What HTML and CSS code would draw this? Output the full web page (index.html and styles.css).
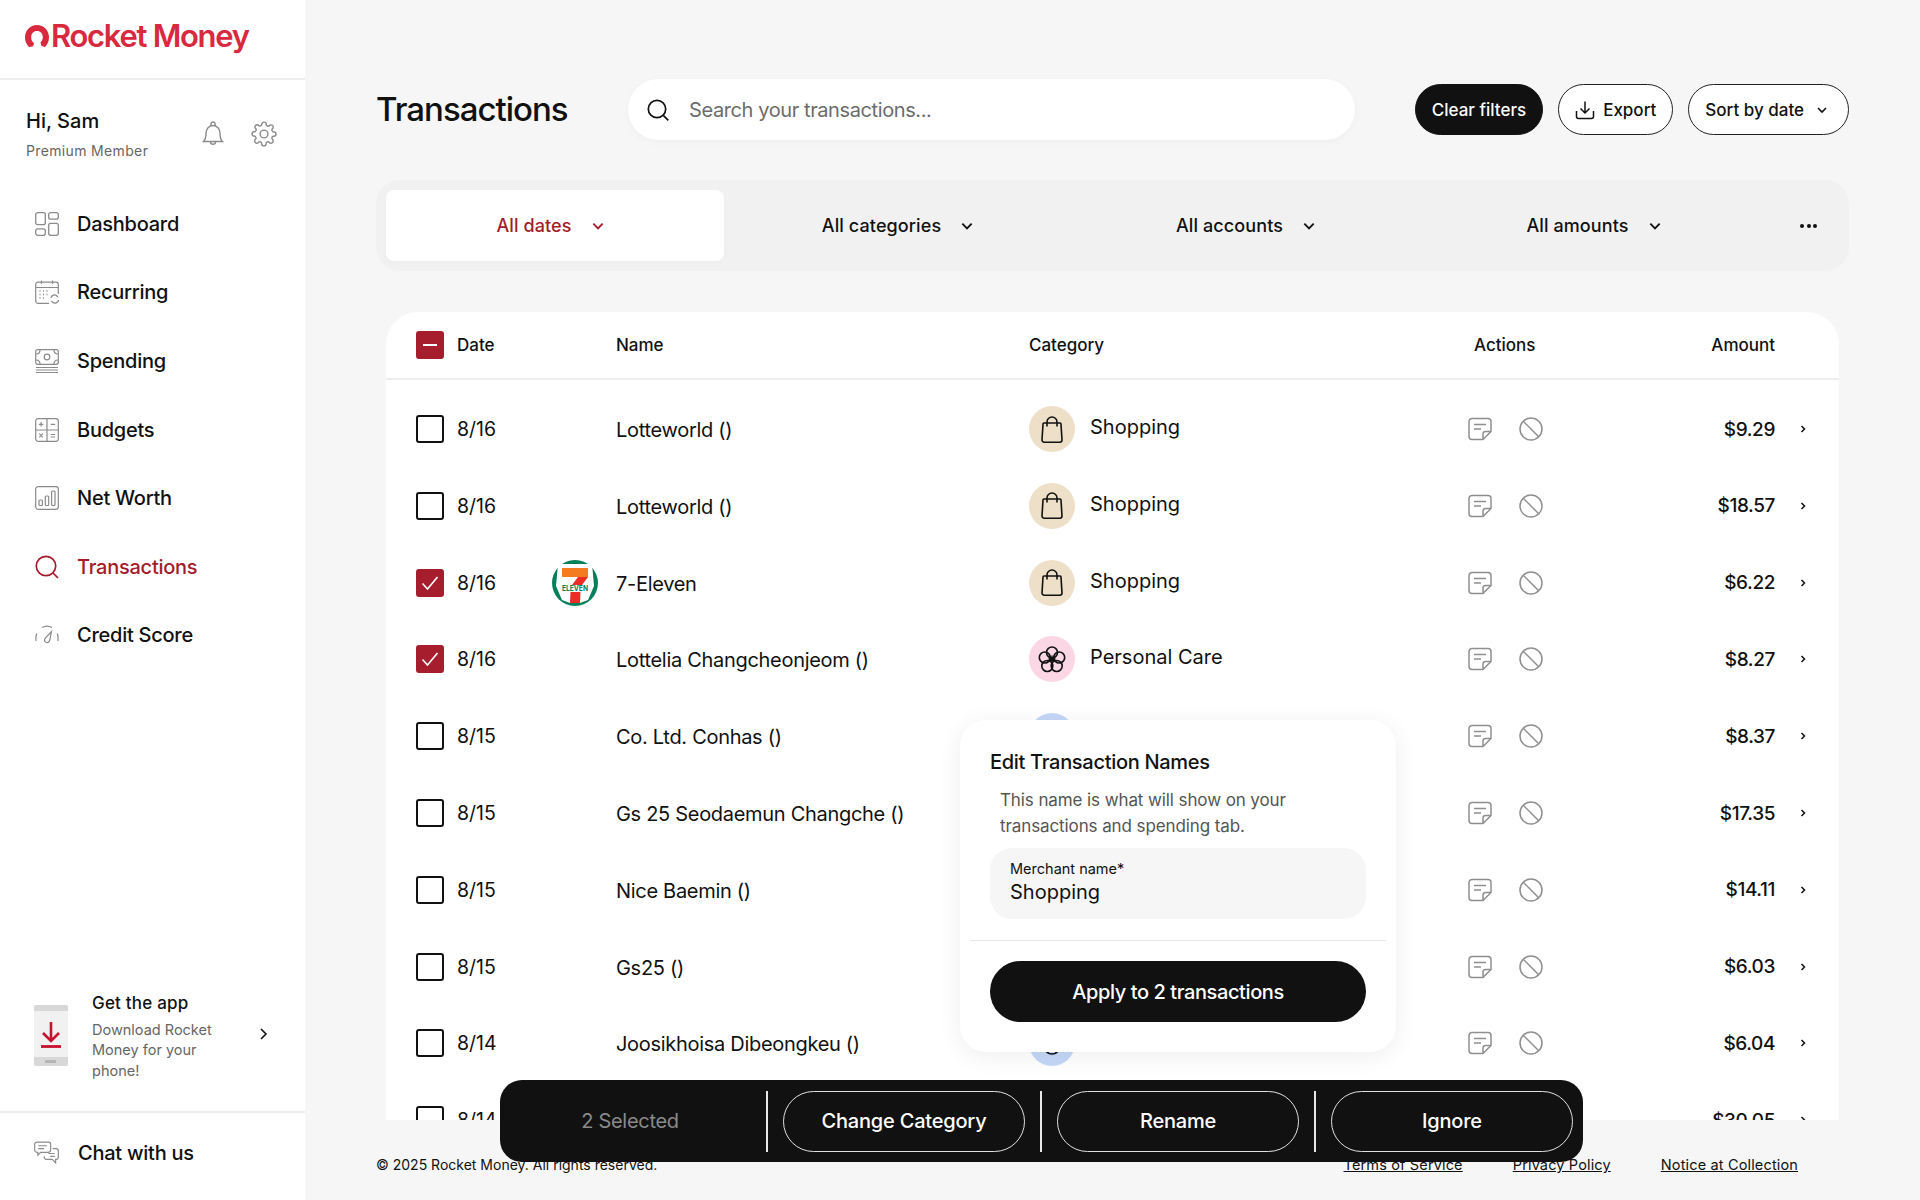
FILE: index.html
```html
<!DOCTYPE html>
<html lang="en">
<head>
  <meta charset="UTF-8" />
  <title>Transactions - Rocket Money</title>
  <link rel="stylesheet" href="styles.css">
  <meta name="viewport" content="width=device-width, initial-scale=1.0" />
</head>
<body>

  <!-- shared icons -->
  <svg class="defs" width="0" height="0">
    <symbol id="i-down" viewBox="0 0 12 12"><path d="M2 4l4 4 4-4" fill="none" stroke="currentColor" stroke-width="1.6"/></symbol>
    <symbol id="i-bag" viewBox="0 0 22 27"><path d="M3 7h16a1 1 0 0 1 1 1l1 16a2.200 2.200 0 0 1-2.200 2.200H3.200A2.200 2.200 0 0 1 1 24L2 8a1 1 0 0 1 1-1zM6 10.500V6a5 5 0 0 1 10 0v4.500" fill="none" stroke="currentColor" stroke-width="1.600"/></symbol>
    <symbol id="i-flower" viewBox="0 0 28 28" fill="none" stroke="currentColor" stroke-width="1.600"><circle cx="14" cy="7.500" r="5.500"/><circle cx="6.800" cy="12.500" r="5.500"/><circle cx="21.200" cy="12.500" r="5.500"/><circle cx="9.300" cy="21" r="5.500"/><circle cx="18.700" cy="21" r="5.500"/><path d="M14 10.500v7M10.500 14h7M11.500 11.500l5 5M16.500 11.500l-5 5" stroke-width="1.400"/></symbol>
    <symbol id="i-note" viewBox="0 0 24 24" fill="none" stroke="currentColor" stroke-width="1.500"><path d="M15 22.500H4a3 3 0 0 1-3-3v-15a3 3 0 0 1 3-3h16a3 3 0 0 1 3 3V14.500zM15 22.500V17a2.500 2.500 0 0 1 2.500-2.500H23M6 7.500h12M6 12h7"/></symbol>
    <symbol id="i-ban" viewBox="0 0 24 24" fill="none" stroke="currentColor" stroke-width="1.500"><circle cx="12" cy="12" r="11"/><path d="M4.300 4.300l15.400 15.400"/></symbol>
    <symbol id="i-next" viewBox="0 0 8 10"><path d="M2.500 2l3 3-3 3" fill="none" stroke="currentColor" stroke-width="1.500"/></symbol>
    <symbol id="i-tick" viewBox="0 0 28 28"><path d="M6.500 14.500l5 5.500 10-12" fill="none" stroke="#fff" stroke-width="1.600"/></symbol>
  </svg>

  <div class="page">
    <aside class="sidebar">
      <div class="brand">
        <svg class="brand-mark" viewBox="0 0 24 24"><path d="M4 23C1.500 20.500 0 17.500 0 13.500 0 6 5.500 1 12 1s12 5 12 12.500c0 4-1.500 7-4 9.500l-3.500-1-1-3.500c1.500-1.500 2.300-3 2.300-5.200 0-3.500-2.300-6.200-5.800-6.200s-5.800 2.700-5.800 6.200c0 3 1.200 4.600 3 6.200l-1.500 3z" fill="#d8293f"/></svg>
        <span class="brand-name">Rocket Money</span>
      </div>

      <div class="user">
        <div>
          <div class="user-name">Hi, Sam</div>
          <div class="user-plan">Premium Member</div>
        </div>
        <div class="user-icons">
          <svg width="22" height="26" viewBox="0 0 22 26" fill="none" stroke="#8a8a8a" stroke-width="1.400"><path d="M1.500 20.500c2-2 2.500-4 2.500-8C4 8 7 4.500 11 4.500s7 3.500 7 8c0 4 .5 6 2.500 8zM9 4.500V3a2 2 0 0 1 4 0v1.500M8.500 21c0 3 5 3 5 0"/></svg>
          <svg width="26" height="26" viewBox="0 0 24 24" fill="none" stroke="#8a8a8a" stroke-width="1.300"><circle cx="12" cy="12" r="3.600"/><path d="M19.400 15a1.700 1.700 0 0 0 .3 1.800l.1.100a2 2 0 1 1-2.900 2.900l-.1-.1a1.700 1.700 0 0 0-2.900 1.200V21a2 2 0 1 1-4 0v-.1A1.700 1.700 0 0 0 7 19.700l-.1.100a2 2 0 1 1-2.900-2.900l.1-.1a1.700 1.700 0 0 0-1.200-2.900H3a2 2 0 1 1 0-4h.1A1.700 1.700 0 0 0 4.300 7l-.1-.1A2 2 0 1 1 7 4l.1.1a1.700 1.700 0 0 0 1.900.3 1.700 1.700 0 0 0 1-1.500V3a2 2 0 1 1 4 0v.1a1.700 1.700 0 0 0 2.900 1.200l.1-.1a2 2 0 1 1 2.900 2.900l-.1.1a1.700 1.700 0 0 0 1.200 2.900h.1a2 2 0 1 1 0 4h-.1a1.700 1.700 0 0 0-1.500.9z"/></svg>
        </div>
      </div>

      <nav class="nav">
        <a class="nav-item">
          <svg viewBox="0 0 24 24" fill="none" stroke="#8a8a8a" stroke-width="1.300"><rect x=".7" y=".7" width="9.600" height="12" rx="2"/><rect x="13.700" y=".7" width="9.600" height="6.500" rx="2"/><rect x=".7" y="16.800" width="9.600" height="6.500" rx="2"/><rect x="13.700" y="11.300" width="9.600" height="12" rx="2"/></svg>
          Dashboard
        </a>
        <a class="nav-item">
          <svg viewBox="0 0 24 24" fill="none" stroke="#8a8a8a" stroke-width="1.200"><path d="M14 23.300H3a2.300 2.300 0 0 1-2.300-2.300V4.500A2.300 2.300 0 0 1 3 2.200h18a2.300 2.300 0 0 1 2.300 2.300V14M.7 7.500h22.600M6.500 .5v3.500M17.500 .5v3.500"/><path d="M4.500 11h1M8 11h1M11.500 11h1M4.500 14.500h1M8 14.500h1M11.500 14.500h1M4.500 18h1M8 18h1" stroke-width="1.500"/><path d="M16 18a3.500 3.500 0 0 1 6-2l1 1M23.500 20a3.500 3.500 0 0 1-6 2l-1-1" stroke-width="1.300"/></svg>
          Recurring
        </a>
        <a class="nav-item">
          <svg viewBox="0 0 24 24" fill="none" stroke="#8a8a8a" stroke-width="1.200"><rect x=".7" y=".7" width="22.600" height="14.600" rx="2"/><circle cx="12" cy="8" r="2.800"/><path d="M1 5c2.500 0 4-1.500 4-4M23 5c-2.500 0-4-1.500-4-4M1 11c2.500 0 4 1.500 4 4M23 11c-2.500 0-4 1.500-4 4M1 18.500h22M1 21h22M1 23.500h22"/></svg>
          Spending
        </a>
        <a class="nav-item">
          <svg viewBox="0 0 24 24" fill="none" stroke="#8a8a8a" stroke-width="1.200"><rect x=".7" y=".7" width="22.600" height="22.600" rx="2.500"/><path d="M12 1v22M1 12h22M3.900 6.300h4.400M6.100 4.100v4.400M15.700 6.300h4.400M4.300 15.700l3.600 3.600M7.900 15.700l-3.600 3.600M15.700 16.500h4.400M15.700 19h4.400"/></svg>
          Budgets
        </a>
        <a class="nav-item">
          <svg viewBox="0 0 24 24" fill="none" stroke="#8a8a8a" stroke-width="1.200"><rect x=".7" y=".7" width="22.600" height="22.600" rx="2.500"/><rect x="4" y="14" width="3.400" height="5.500" rx="1"/><rect x="10.300" y="10" width="3.400" height="9.500" rx="1"/><rect x="16.600" y="5" width="3.400" height="14.500" rx="1"/></svg>
          Net Worth
        </a>
        <a class="nav-item nav-item-on">
          <svg viewBox="0 0 24 24" fill="none" stroke="#a41c2c" stroke-width="1.700"><circle cx="11" cy="11" r="9.700"/><path d="M18 18l5 5"/></svg>
          Transactions
        </a>
        <a class="nav-item">
          <svg viewBox="0 0 24 24" fill="none" stroke="#8a8a8a" stroke-width="1.200"><path d="M7 4.500c3-1.700 7-1.700 10 0M1.700 10.500C1 12.500.7 15 1 18M22.300 10.500c.7 2 1 4.500.7 7.500M16.500 8.500L14.800 17c-.5 2-2.200 3-3.800 2.300-1.600-.8-1.900-2.500-.8-4z"/></svg>
          Credit Score
        </a>
      </nav>

      <div class="get-app">
        <svg class="phone" width="34" height="61" viewBox="0 0 34 61"><rect width="34" height="61" rx="2" fill="#f1f1f1"/><path d="M0 6V2a2 2 0 0 1 2-2h30a2 2 0 0 1 2 2v4zM0 52h34v7a2 2 0 0 1-2 2H2a2 2 0 0 1-2-2z" fill="#d8d8d8"/><rect x="11" y="55" width="11" height="3" fill="#b5b5b5"/><path d="M17 17v19M9 28l8 8 8-8" fill="none" stroke="#c4122f" stroke-width="2.600"/><path d="M7 41.500h20" stroke="#c4122f" stroke-width="2.800"/></svg>
        <div class="get-app-text">
          <div class="get-app-title">Get the app</div>
          <div class="get-app-desc">Download Rocket Money for your phone!</div>
        </div>
        <svg class="get-app-go" width="10" height="14" viewBox="0 0 10 14"><path d="M2 2l5 5-5 5" fill="none" stroke="#111" stroke-width="1.600"/></svg>
      </div>

      <a class="chat">
        <svg viewBox="0 0 26 24" fill="none" stroke="#8a8a8a" stroke-width="1.200"><path d="M3 .7h12a2.300 2.300 0 0 1 2.300 2.300v6a2.300 2.300 0 0 1-2.300 2.300H7l-3 3v-3H3A2.300 2.300 0 0 1 .7 9V3A2.300 2.300 0 0 1 3 .7zM4.500 4.500h9M4.500 7.500h6"/><path d="M19.500 7.500H23A2.300 2.300 0 0 1 25.300 9.800v6.500A2.300 2.300 0 0 1 23 18.600h-.5v3.600l-3.500-3.600h-6a2.300 2.300 0 0 1-2.300-2.300v-1M15 12.500h6.500M17 15.500h4.500"/></svg>
        Chat with us
      </a>
    </aside>

    <main class="main">
      <header class="top">
        <h1 class="title">Transactions</h1>
        <div class="search">
          <svg width="24" height="24" viewBox="0 0 24 24" fill="none" stroke="#111" stroke-width="1.700"><circle cx="11" cy="11" r="8.700"/><path d="M17.300 17.300l5 5"/></svg>
          <span>Search your transactions...</span>
        </div>
        <div class="top-actions">
          <button class="pill pill-dark">Clear filters</button>
          <button class="pill">
            <svg width="20" height="20" viewBox="0 0 20 20" fill="none" stroke="#111" stroke-width="1.500"><path d="M10 1.500v11M5.500 8.500l4.500 4.500 4.500-4.500M1.500 11v5.500a2 2 0 0 0 2 2h13a2 2 0 0 0 2-2V11"/></svg>
            Export
          </button>
          <button class="pill">Sort by date <svg class="chev-sm"><use href="#i-down"/></svg></button>
        </div>
      </header>

      <div class="filters">
        <div class="filter filter-on">All dates <svg class="chev"><use href="#i-down"/></svg></div>
        <div class="filter">All categories <svg class="chev"><use href="#i-down"/></svg></div>
        <div class="filter">All accounts <svg class="chev"><use href="#i-down"/></svg></div>
        <div class="filter">All amounts <svg class="chev"><use href="#i-down"/></svg></div>
        <div class="filter filter-more"><i></i><i></i><i></i></div>
      </div>

      <section class="card">
        <div class="row row-head">
          <span class="check check-on"><b class="dash"></b></span>
          <span>Date</span>
          <span></span>
          <span>Name</span>
          <span>Category</span>
          <span class="head-actions">Actions</span>
          <span class="amount">Amount</span>
          <span></span>
        </div>

        <div class="rows">
          <div class="row">
            <span class="check"></span>
            <span class="date">8/16</span>
            <span></span>
            <span class="name">Lotteworld ()</span>
            <span class="cat"><span class="cat-icon tan"><svg class="bag"><use href="#i-bag"/></svg></span><span class="cat-name">Shopping</span></span>
            <span class="acts"><svg><use href="#i-note"/></svg><svg><use href="#i-ban"/></svg></span>
            <span class="amount">$9.29</span>
            <svg class="next"><use href="#i-next"/></svg>
          </div>
          <div class="row">
            <span class="check"></span>
            <span class="date">8/16</span>
            <span></span>
            <span class="name">Lotteworld ()</span>
            <span class="cat"><span class="cat-icon tan"><svg class="bag"><use href="#i-bag"/></svg></span><span class="cat-name">Shopping</span></span>
            <span class="acts"><svg><use href="#i-note"/></svg><svg><use href="#i-ban"/></svg></span>
            <span class="amount">$18.57</span>
            <svg class="next"><use href="#i-next"/></svg>
          </div>
          <div class="row">
            <span class="check check-on"><svg><use href="#i-tick"/></svg></span>
            <span class="date">8/16</span>
            <svg class="seven" viewBox="0 0 46 46">
              <circle cx="23" cy="23" r="23" fill="#00805a"/>
              <path d="M6 4h34l2 22-6 14-8 3H18l-8-3-6-14z" fill="#fff"/>
              <path d="M10 8h26v9H10z" fill="#f47b20"/>
              <path d="M26 17h10l-6 8H20z" fill="#ee2b24"/>
              <path d="M18.500 32h10l-.5 11H18z" fill="#ee2b24"/>
              <text x="23" y="30.500" class="seven-text" textLength="26" lengthAdjust="spacingAndGlyphs">ELEVEN</text>
            </svg>
            <span class="name">7-Eleven</span>
            <span class="cat"><span class="cat-icon tan"><svg class="bag"><use href="#i-bag"/></svg></span><span class="cat-name">Shopping</span></span>
            <span class="acts"><svg><use href="#i-note"/></svg><svg><use href="#i-ban"/></svg></span>
            <span class="amount">$6.22</span>
            <svg class="next"><use href="#i-next"/></svg>
          </div>
          <div class="row">
            <span class="check check-on"><svg><use href="#i-tick"/></svg></span>
            <span class="date">8/16</span>
            <span></span>
            <span class="name">Lottelia Changcheonjeom ()</span>
            <span class="cat"><span class="cat-icon pink"><svg class="flower"><use href="#i-flower"/></svg></span><span class="cat-name">Personal Care</span></span>
            <span class="acts"><svg><use href="#i-note"/></svg><svg><use href="#i-ban"/></svg></span>
            <span class="amount">$8.27</span>
            <svg class="next"><use href="#i-next"/></svg>
          </div>
          <div class="row">
            <span class="check"></span>
            <span class="date">8/15</span>
            <span></span>
            <span class="name">Co. Ltd. Conhas ()</span>
            <span class="cat"><span class="cat-icon blue"></span></span>
            <span class="acts"><svg><use href="#i-note"/></svg><svg><use href="#i-ban"/></svg></span>
            <span class="amount">$8.37</span>
            <svg class="next"><use href="#i-next"/></svg>
          </div>
          <div class="row">
            <span class="check"></span>
            <span class="date">8/15</span>
            <span></span>
            <span class="name">Gs 25 Seodaemun Changche ()</span>
            <span class="cat"></span>
            <span class="acts"><svg><use href="#i-note"/></svg><svg><use href="#i-ban"/></svg></span>
            <span class="amount">$17.35</span>
            <svg class="next"><use href="#i-next"/></svg>
          </div>
          <div class="row">
            <span class="check"></span>
            <span class="date">8/15</span>
            <span></span>
            <span class="name">Nice Baemin ()</span>
            <span class="cat"></span>
            <span class="acts"><svg><use href="#i-note"/></svg><svg><use href="#i-ban"/></svg></span>
            <span class="amount">$14.11</span>
            <svg class="next"><use href="#i-next"/></svg>
          </div>
          <div class="row">
            <span class="check"></span>
            <span class="date">8/15</span>
            <span></span>
            <span class="name">Gs25 ()</span>
            <span class="cat"></span>
            <span class="acts"><svg><use href="#i-note"/></svg><svg><use href="#i-ban"/></svg></span>
            <span class="amount">$6.03</span>
            <svg class="next"><use href="#i-next"/></svg>
          </div>
          <div class="row">
            <span class="check"></span>
            <span class="date">8/14</span>
            <span></span>
            <span class="name">Joosikhoisa Dibeongkeu ()</span>
            <span class="cat"><span class="cat-icon blue"><svg class="smile" viewBox="0 0 28 28"><path d="M8 22c3 4 9 4 12 0" fill="none" stroke="#111" stroke-width="1.600"/></svg></span></span>
            <span class="acts"><svg><use href="#i-note"/></svg><svg><use href="#i-ban"/></svg></span>
            <span class="amount">$6.04</span>
            <svg class="next"><use href="#i-next"/></svg>
          </div>
          <div class="row">
            <span class="check"></span>
            <span class="date">8/14</span>
            <span></span>
            <span class="name"></span>
            <span class="cat"></span>
            <span class="acts"></span>
            <span class="amount">$30.05</span>
            <svg class="next"><use href="#i-next"/></svg>
          </div>
        </div>
      </section>

      <footer class="foot">
        <span>© 2025 Rocket Money. All rights reserved.</span>
        <div class="foot-links">
          <a>Terms of Service</a>
          <a>Privacy Policy</a>
          <a>Notice at Collection</a>
        </div>
      </footer>
    </main>

    <!-- floats over the table -->
    <div class="modal">
      <h3 class="modal-title">Edit Transaction Names</h3>
      <p class="modal-desc">This name is what will show on your transactions and spending tab.</p>
      <div class="field">
        <label>Merchant name*</label>
        <div class="field-value">Shopping</div>
      </div>
      <hr class="modal-line" />
      <button class="apply">Apply to 2 transactions</button>
    </div>

    <div class="bulk">
      <div class="bulk-count">2 Selected</div>
      <i class="bulk-line"></i>
      <button class="bulk-btn">Change Category</button>
      <i class="bulk-line"></i>
      <button class="bulk-btn">Rename</button>
      <i class="bulk-line"></i>
      <button class="bulk-btn">Ignore</button>
    </div>
  </div>

</body>
</html>
```

FILE: styles.css
```css
* {
  box-sizing: border-box;
}

body {
  margin: 0;
  font-family: 'Inter', 'Noto Sans', sans-serif;
  background: #f6f6f6;
  color: #111;
}

button {
  font-family: inherit;
  cursor: pointer;
}

.defs {
  position: absolute;
}

.page {
  position: relative;
  display: flex;
  height: 1200px;
  overflow: hidden;
}

/* sidebar */
.sidebar {
  width: 305px;
  flex-shrink: 0;
  background: #fff;
  display: flex;
  flex-direction: column;
}

.brand {
  height: 80px;
  padding: 22px 0 0 25px;
  border-bottom: 2px solid #eee;
  display: flex;
  align-items: flex-start;
  gap: 2px;
}

.brand-mark {
  width: 24px;
  height: 24px;
  margin-top: 2px;
}

.brand-name {
  font-size: 31px;
  line-height: 28px;
  font-weight: 600;
  color: #d8293f;
  letter-spacing: -1.300px;
}

.user {
  display: flex;
  justify-content: space-between;
  align-items: center;
  padding: 29px 28px 0 26px;
}

.user-name {
  font-size: 20px;
  font-weight: 500;
  line-height: 24px;
}

.user-plan {
  font-size: 14px;
  color: #666;
  margin-top: 9px;
  line-height: 18px;
  letter-spacing: .35px;
}

.user-icons {
  display: flex;
  gap: 27px;
  align-items: center;
  margin-top: -2px;
}

.nav {
  margin-top: 29.500px;
  display: flex;
  flex-direction: column;
}

.nav-item {
  height: 68.600px;
  padding-left: 35px;
  display: flex;
  align-items: center;
  gap: 18px;
  font-size: 20px;
  font-weight: 500;
  letter-spacing: -.25px;
}

.nav-item svg {
  width: 24px;
  height: 24px;
}

.nav-item-on {
  color: #a41c2c;
}

.get-app {
  margin-top: auto;
  padding: 0 0 30px 34px;
  display: flex;
  align-items: center;
}

.phone {
  flex-shrink: 0;
  margin-top: 0;
}

.get-app-text {
  width: 140px;
  margin-left: 24px;
}

.get-app-title {
  font-size: 17px;
  font-weight: 500;
  line-height: 24px;
  margin-bottom: 5px;
  letter-spacing: .2px;
}

.get-app-desc {
  font-size: 14.500px;
  line-height: 20.500px;
  color: #666;
}

.get-app-go {
  margin-left: 27px;
  margin-top: -3px;
}

.chat {
  height: 89px;
  border-top: 2px solid #eee;
  padding: 0 0 8px 34px;
  display: flex;
  align-items: center;
  gap: 19px;
  font-size: 20px;
  font-weight: 500;
  letter-spacing: -.25px;
}

.chat svg {
  width: 25px;
  height: 24px;
}

/* main column */
.main {
  flex: 1;
  min-width: 0;
  padding: 79px 71px 0;
  display: flex;
  flex-direction: column;
}

.top {
  display: flex;
  align-items: center;
  height: 61px;
}

.title {
  width: 252px;
  margin: 0 0 2px;
  font-size: 33px;
  font-weight: 500;
  letter-spacing: -1px;
}

.search {
  width: 727px;
  height: 61px;
  background: #fff;
  border-radius: 31px;
  padding-left: 18px;
  display: flex;
  align-items: center;
  gap: 19px;
  font-size: 20px;
  letter-spacing: -.4px;
  color: #6c6c6c;
  box-shadow: 0 2px 8px rgba(0, 0, 0, .03);
}

.top-actions {
  margin-left: auto;
  display: flex;
  gap: 15px;
}

.pill {
  height: 51px;
  padding: 0 16px;
  border: 1.500px solid #222;
  border-radius: 26px;
  background: #fff;
  color: #111;
  font-size: 17px;
  font-weight: 500;
  display: flex;
  align-items: center;
  gap: 8px;
}

.pill-dark {
  background: #111;
  color: #fff;
  border-color: #111;
}

.chev-sm {
  width: 12px;
  height: 12px;
  margin: 0 4px 0 4px;
}

.filters {
  margin-top: 40px;
  height: 91px;
  padding: 10px;
  background: #f1f1f1;
  border-radius: 24px;
  display: grid;
  grid-template-columns: 338px 348px 348px 348px 1fr;
  align-items: center;
}

.filter {
  height: 71px;
  display: flex;
  align-items: center;
  justify-content: center;
  gap: 19px;
  font-size: 18px;
  font-weight: 500;
  letter-spacing: .1px;
}

.chev {
  width: 14px;
  height: 14px;
}

.filter-on {
  background: #fff;
  border-radius: 8px;
  color: #a41c2c;
  padding-right: 9px;
  box-shadow: 0 2px 6px rgba(0, 0, 0, .02);
}

.filter-more {
  gap: 2.500px;
  padding-left: 10px;
}

.filter-more i {
  width: 4px;
  height: 4px;
  border-radius: 50%;
  background: #111;
}

/* table */
.card {
  margin: 41px 10px 0;
  height: 808px;
  background: #fff;
  border-radius: 32px 32px 0 0;
  overflow: hidden;
  flex-shrink: 0;
}

.row {
  display: grid;
  grid-template-columns: 41px 95px 64px 413px 439px 75px 232px 34px;
  align-items: center;
  height: 76.800px;
  padding: 0 30px;
}

.row-head {
  height: 68px;
  border-bottom: 2px solid #eee;
  font-size: 17px;
  font-weight: 500;
}

.head-actions {
  padding-left: 6px;
  white-space: nowrap;
}

.rows {
  padding-top: 10.700px;
}

.check {
  width: 28px;
  height: 28px;
  border: 2.500px solid #111;
  border-radius: 3px;
  display: flex;
  align-items: center;
  justify-content: center;
}

.check-on {
  background: #a61e2d;
  border: none;
  border-radius: 3px;
}

.check svg {
  width: 28px;
  height: 28px;
}

.dash {
  width: 14px;
  height: 2px;
  background: #fff;
}

.date {
  font-size: 19.500px;
}

.name {
  font-size: 20px;
  letter-spacing: -.3px;
  position: relative;
  top: 1px;
  white-space: nowrap;
}

.seven {
  width: 46px;
  height: 46px;
}

.seven-text {
  font-size: 7.500px;
  font-weight: 700;
  fill: #00805a;
  text-anchor: middle;
}

.cat {
  display: flex;
  align-items: center;
  gap: 15px;
}

.cat-icon {
  width: 46px;
  height: 46px;
  border-radius: 50%;
  display: flex;
  align-items: center;
  justify-content: center;
}

.tan {
  background: #eee0c8;
}

.pink {
  background: #fbd6e4;
}

.blue {
  background: #c5d8f8;
}

.bag {
  width: 22px;
  height: 27px;
}

.flower {
  width: 28px;
  height: 28px;
}

.smile {
  width: 28px;
  height: 28px;
}

.cat-name {
  font-size: 20px;
  position: relative;
  top: -2px;
}

.acts {
  display: flex;
  gap: 27px;
  color: #8f8f8f;
}

.acts svg {
  width: 24px;
  height: 24px;
}

.amount {
  text-align: right;
  font-size: 19px;
  font-weight: 500;
  letter-spacing: -.4px;
}

.row-head .amount {
  font-size: 17px;
  letter-spacing: 0;
}

.next {
  width: 8px;
  height: 10px;
  justify-self: end;
  color: #111;
  margin-right: 2px;
}

.foot {
  display: flex;
  justify-content: space-between;
  padding-top: 36px;
  padding-right: 51px;
  font-size: 14px;
  line-height: 18px;
}

.foot-links {
  display: flex;
  gap: 50px;
  font-size: 14.500px;
  letter-spacing: .15px;
}

.foot-links a {
  text-decoration: underline;
}

/* edit popover */
.modal {
  position: absolute;
  left: 960px;
  top: 720px;
  width: 436px;
  height: 332px;
  padding: 29px 30px 0;
  background: #fff;
  border-radius: 26px;
  box-shadow: 0 4px 24px rgba(0, 0, 0, .07);
}

.modal-title {
  margin: 0;
  font-size: 20px;
  font-weight: 500;
  line-height: 26px;
  letter-spacing: -.3px;
}

.modal-desc {
  margin: 13px 0 0;
  padding: 0 40px 0 10px;
  font-size: 17px;
  line-height: 25.500px;
  letter-spacing: -.1px;
  color: #555;
}

.field {
  margin-top: 9px;
  height: 71px;
  padding: 12px 20px;
  background: #f6f6f6;
  border-radius: 22px;
}

.field label {
  display: block;
  font-size: 14.500px;
  line-height: 18px;
}

.field-value {
  font-size: 20px;
  line-height: 29px;
}

.modal-line {
  margin: 21px -20px 20px;
  border: none;
  border-top: 1px solid #e6e6e6;
}

.apply {
  width: 100%;
  height: 61px;
  border: none;
  border-radius: 31px;
  background: #111;
  color: #fff;
  font-size: 20px;
  font-weight: 500;
  letter-spacing: -.4px;
}

/* bulk actions */
.bulk {
  position: absolute;
  left: 500px;
  top: 1080px;
  width: 1083px;
  height: 82px;
  background: #111;
  border-radius: 22px;
  display: flex;
  align-items: center;
}

.bulk-count {
  width: 266px;
  flex-shrink: 0;
  padding-right: 6px;
  text-align: center;
  font-size: 20px;
  letter-spacing: -.3px;
  color: #8a8a8a;
}

.bulk-line {
  width: 2px;
  height: 61px;
  flex-shrink: 0;
  background: #e8e8e8;
  margin-right: 15px;
}

.bulk-btn {
  width: 242px;
  height: 61px;
  flex-shrink: 0;
  margin-right: 15px;
  border: 1.500px solid #e0e0e0;
  border-radius: 31px;
  background: transparent;
  color: #fff;
  font-size: 20px;
  font-weight: 500;
  letter-spacing: -.2px;
}

.bulk-btn:last-child {
  margin-right: 0;
}
```
